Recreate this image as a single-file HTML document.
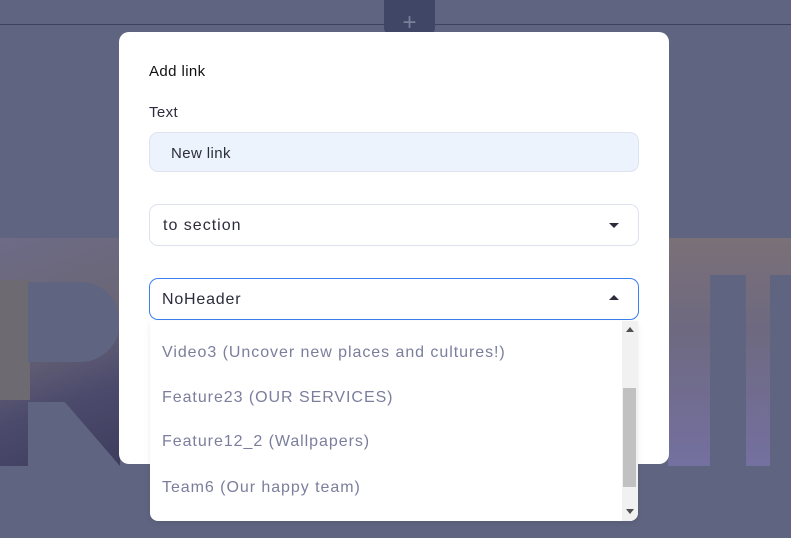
<!DOCTYPE html>
<html><head><meta charset="utf-8"><style>
*{box-sizing:border-box;margin:0;padding:0}
body{width:791px;height:538px;overflow:hidden;background:#5f6480;font-family:"Liberation Sans",sans-serif;position:relative}
.abs{position:absolute}
.t{color:#2c2c3c}
.dd{font-size:16px;color:#7b7e9c;letter-spacing:0.95px}
</style></head><body>
<div class="abs" style="left:0;top:24px;width:791px;height:1px;background:#3c4160"></div>
<div class="abs" style="left:384px;top:0;width:51px;height:34px;background:#3f4666;border-radius:0 0 6px 6px;color:#7a809a;font-size:24px;text-align:center;line-height:46px">+</div>
<div class="abs" style="left:0;top:238px;width:120px;height:228px;background:linear-gradient(160deg,#6d6b86 0%,#6a6676 40%,#4b4a6c 70%,#3e3d5e 100%)"></div>
<div class="abs" style="left:0;top:280px;width:30px;height:120px;background:#6e6a72"></div>
<div class="abs" style="left:28px;top:282px;width:92px;height:80px;background:#5f6480;border-radius:0 40px 40px 0"></div>
<div class="abs" style="left:28px;top:402px;width:92px;height:64px;background:#5f6480;clip-path:polygon(0 0,40% 0,100% 100%,0 100%)"></div>
<div class="abs" style="left:668px;top:238px;width:123px;height:228px;background:linear-gradient(180deg,#7a7078 0%,#6e6980 40%,#7470a0 100%)"></div>
<div class="abs" style="left:710px;top:275px;width:36px;height:191px;background:#5f6480"></div>
<div class="abs" style="left:770px;top:275px;width:21px;height:191px;background:#5f6480"></div>
<div class="abs" style="left:119px;top:32px;width:550px;height:432px;background:#fff;border-radius:10px"></div>
<div class="abs t" style="left:149px;top:63px;font-size:15px;color:#111;letter-spacing:0.4px">Add link</div>
<div class="abs t" style="left:149px;top:104px;font-size:15px;letter-spacing:0.4px">Text</div>
<div class="abs" style="left:149px;top:132px;width:490px;height:40px;background:#edf3fd;border:1px solid #dde4f0;border-radius:9px;font-size:15px;color:#2c2c3c;padding:12px 0 0 21px;letter-spacing:0.4px">New link</div>
<div class="abs" style="left:149px;top:204px;width:490px;height:42px;background:#fff;border:1px solid #dde2ee;border-radius:9px;font-size:16px;color:#2c2c3c;padding:12px 0 0 13px;letter-spacing:1px">to section</div>
<div class="abs" style="left:609px;top:223px;width:0;height:0;border-left:5px solid transparent;border-right:5px solid transparent;border-top:5px solid #2c2c3c"></div>
<div class="abs" style="left:149px;top:278px;width:490px;height:42px;background:#fff;border:1px solid #3b7ff0;border-radius:9px;font-size:16px;color:#2c2c3c;padding:12px 0 0 12px;letter-spacing:0.8px">NoHeader</div>
<div class="abs" style="left:609px;top:295px;width:0;height:0;border-left:5px solid transparent;border-right:5px solid transparent;border-bottom:5px solid #2c2c3c"></div>
<div class="abs" style="left:150px;top:321px;width:488px;height:200px;background:#fff;border-radius:0 0 8px 8px;box-shadow:0 2px 6px rgba(0,0,0,.08);overflow:hidden">
<div class="abs" style="left:472px;top:0;width:16px;height:200px;background:#f1f1f1"></div>
<div class="abs" style="left:473px;top:67px;width:13px;height:99px;background:#c1c1c1"></div>
<div class="abs" style="left:476px;top:6px;width:0;height:0;border-left:4px solid transparent;border-right:4px solid transparent;border-bottom:5px solid #505050"></div>
<div class="abs" style="left:476px;top:188px;width:0;height:0;border-left:4px solid transparent;border-right:4px solid transparent;border-top:5px solid #505050"></div>
<div class="abs dd" style="left:12px;top:23px">Video3 (Uncover new places and cultures!)</div>
<div class="abs dd" style="left:12px;top:68px">Feature23 (OUR SERVICES)</div>
<div class="abs dd" style="left:12px;top:112px">Feature12_2 (Wallpapers)</div>
<div class="abs dd" style="left:12px;top:158px">Team6 (Our happy team)</div>
</div>
</body></html>
